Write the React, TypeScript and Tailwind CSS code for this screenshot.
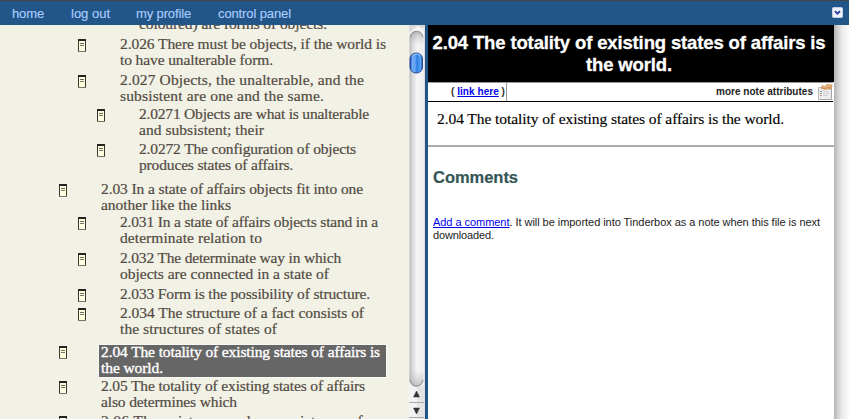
import { useLayoutEffect, useRef, useState } from "react";
import type { ReactNode } from "react";

/** One line of text, letter-spaced so that it spans `width` pixels. */
function Line({ width, className = "", children }: { width: number; className?: string; children: ReactNode }) {
  const ref = useRef<HTMLSpanElement>(null);
  const [spacing, setSpacing] = useState(0);
  useLayoutEffect(() => {
    const el = ref.current;
    if (!el) return;
    const natural = el.getBoundingClientRect().width;
    const count = (el.textContent ?? "").length;
    if (count > 1) setSpacing((width - natural) / count);
  }, [width]);
  return (
    <span className={`block w-max whitespace-pre ${className}`} ref={ref} style={{ letterSpacing: `${spacing}px` }}>
      {children}
    </span>
  );
}

type Note = { level: 1 | 2 | 3; height: string; lines: [string, number][]; selected?: boolean };

const notes: Note[] = [
  { level: 2, height: "h-9", lines: [["2.026 There must be objects, if the world is", 266], ["to have unalterable form.", 153]] },
  { level: 2, height: "h-[34px]", lines: [["2.027 Objects, the unalterable, and the", 244], ["subsistent are one and the same.", 204]] },
  { level: 3, height: "h-[35px]", lines: [["2.0271 Objects are what is unalterable", 230], ["and subsistent; their", 125]] },
  { level: 3, height: "h-10", lines: [["2.0272 The configuration of objects", 217], ["produces states of affairs.", 154]] },
  { level: 1, height: "h-[33px]", lines: [["2.03 In a state of affairs objects fit into one", 262], ["another like the links", 130]] },
  { level: 2, height: "h-9", lines: [["2.031 In a state of affairs objects stand in a", 258], ["determinate relation to", 142]] },
  { level: 2, height: "h-9", lines: [["2.032 The determinate way in which", 221], ["objects are connected in a state of", 209]] },
  { level: 2, height: "h-[19px]", lines: [["2.033 Form is the possibility of structure.", 250]] },
  { level: 2, height: "h-[38px]", lines: [["2.034 The structure of a fact consists of", 244], ["the structures of states of", 157]] },
  { level: 1, height: "h-[35px]", selected: true, lines: [["2.04 The totality of existing states of affairs is", 279], ["the world.", 62]] },
  { level: 1, height: "h-[35px]", lines: [["2.05 The totality of existing states of affairs", 264], ["also determines which", 136]] },
  { level: 1, height: "h-[35px]", lines: [["2.06 The existence and non-existence of", 262]] },
];

const indent = { 1: "pl-[59px]", 2: "pl-[78px]", 3: "pl-[97px]" };

function NoteIcon() {
  return (
    <svg className="mt-[3px] block shrink-0" width="8" height="13" viewBox="0 0 8 13" shapeRendering="crispEdges">
      <rect width="8" height="13" fill="#39372f" />
      <rect x="1" y="2" width="6" height="10" fill="#ffffdf" />
      <rect width="8" height="2" fill="#25231f" />
      <rect y="12" width="8" height="1" fill="#77756b" />
      <rect x="2" y="4" width="4" height="1" fill="#69675c" />
      <rect x="2" y="6" width="4" height="1" fill="#77756a" />
    </svg>
  );
}

function Outline() {
  return (
    <div className="h-full w-[409px] overflow-hidden bg-[#f1f1e5] font-['Liberation_Serif',serif] text-[15.5px] leading-4 text-[#514a42] [-webkit-text-stroke:0.2px]">
      <div className="-mt-[9px] h-5 pl-[139px]">
        <Line width={188}>coloured) are forms of objects.</Line>
      </div>
      {notes.map((note) => (
        <div key={note.lines[0][0]} className={`flex ${note.height} ${indent[note.level]}`}>
          <NoteIcon />
          {note.selected ? (
            <div className="ml-[31px] mt-px flex h-[34px] w-[289px] flex-col border border-dotted border-white bg-[#666] bg-clip-padding pl-[2px] text-white [-webkit-text-stroke:0.35px]">
              {note.lines.map(([text, width]) => <Line key={text} width={width} className="-mt-px mb-px">{text}</Line>)}
            </div>
          ) : (
            <div className="ml-[34px]">
              {note.lines.map(([text, width]) => <Line key={text} width={width}>{text}</Line>)}
            </div>
          )}
        </div>
      ))}
    </div>
  );
}

function Scrollbar() {
  return (
    <svg className="block h-[394px] w-[16px] shrink-0" viewBox="0 0 16 394">
      <defs>
        <linearGradient id="track">
          <stop offset="0" stopColor="#b9b9b9" />
          <stop offset=".2" stopColor="#d9d9d9" />
          <stop offset=".55" stopColor="#f6f6f6" />
          <stop offset="1" stopColor="#ececec" />
        </linearGradient>
        <linearGradient id="thumb">
          <stop offset="0" stopColor="#1643b5" />
          <stop offset=".2" stopColor="#73adf5" />
          <stop offset=".45" stopColor="#5b9df2" />
          <stop offset=".55" stopColor="#2f7ce4" />
          <stop offset=".85" stopColor="#58a5f4" />
          <stop offset="1" stopColor="#24489b" />
        </linearGradient>
        <linearGradient id="capTop" x2="0" y2="1">
          <stop offset="0" stopColor="#777" stopOpacity=".5" />
          <stop offset="1" stopColor="#aaa" stopOpacity="0" />
        </linearGradient>
        <linearGradient id="capBottom" x2="0" y2="1">
          <stop offset="0" stopColor="#aaa" stopOpacity="0" />
          <stop offset="1" stopColor="#888" stopOpacity=".5" />
        </linearGradient>
      </defs>
      <rect width="16" height="394" fill="#f3f3f3" />
      <path d="M0 0H16V4L8 1L0 8Z" fill="#dadada" />
      <rect x=".5" y="6" width="14" height="356" rx="7" fill="url(#track)" />
      <path d="M.5 20V14a7 8 0 0 1 14 0v6Z" fill="url(#capTop)" />
      <path d="M.5 345v9a7 8 0 0 0 14 0v-9Z" fill="url(#capBottom)" />
      <path d="M1 12C2 4.500 13 4.500 14 12M1 355C2 363 13 363 14 355" fill="none" stroke="#909090" />
      <rect x="1" y="28" width="12.500" height="20" rx="6" fill="url(#thumb)" stroke="#254894" />
      <path d="M4 30.500C6 28.500 9 28.500 11 30.500" fill="none" stroke="#b8d4fa" />
      <path d="M8 394V362L16 360V394Z" fill="#e4e4e4" />
      <path d="M0 377.500H16M0 392.500H16" stroke="#aaa" />
      <path d="M7.500 366L10.500 372H4.500ZM7.500 389L10.500 383H4.500Z" fill="#333" stroke="#333" strokeWidth=".5" />
      <path d="M15.500 0V394" stroke="#dedede" />
    </svg>
  );
}

function AttributesIcon() {
  return (
    <svg className="ml-[5px] block" width="15" height="16" viewBox="0 0 15 16">
      <path d="M.5 3.500H13.500V15.500H.5Z" fill="#ededed" stroke="#b9b9b9" />
      <path d="M1 15.500H13.500V4" fill="none" stroke="#a5a5a5" />
      <path d="M2 7.500H4" stroke="#779bd1" />
      <path d="M2 9.500H4" stroke="#7fbd7e" />
      <path d="M2 11.500H4" stroke="#d88d8d" />
      <path d="M5 7.500H11M5 9.500H11M5 11.500H10" stroke="#d2d2d2" />
      <path d="M4 1L7 2L9 0L14 .5L14.500 3L12 6L10 5L7 6L5 5L3 5Z" fill="#d69d65" />
      <path d="M5 3L8 3L10 1.500L13 2" fill="none" stroke="#efc18d" />
    </svg>
  );
}

export default function App() {
  return (
    <div className="h-[419px] w-[849px] overflow-hidden bg-white font-['Liberation_Sans',Arial,sans-serif]">
      <header className="flex h-[25px] items-center border-t border-[#464646] bg-[#225588] text-[13px] leading-4 text-[#a9ccff] [-webkit-text-stroke:0.15px]">
        <nav className="flex pl-3 pt-[2px]">
          <a className="w-[59px]"><Line width={32}>home</Line></a>
          <a className="w-[65px]"><Line width={39}>log out</Line></a>
          <a className="w-[82px]"><Line width={55}>my profile</Line></a>
          <a><Line width={73}>control panel</Line></a>
        </nav>
        <svg className="mb-px ml-auto mr-[6px]" width="11" height="11" viewBox="0 0 11 11">
          <rect x=".5" y=".5" width="10" height="10" rx="1" fill="#eef0fb" stroke="#c7cfeb" />
          <path d="M3 4.200L5.500 6.700L8 4.200" fill="none" stroke="#2538a6" strokeWidth="1.800" />
        </svg>
      </header>
      <div className="flex h-[394px]">
        <Outline />
        <Scrollbar />
        <div className="w-[3px] bg-[#225588]" />
        <main className="w-[406px] text-black">
          <h1 className="flex h-[57px] flex-col items-center bg-black pr-1 pt-[7px] text-[18.5px] font-bold leading-[22px] text-white [-webkit-text-stroke:0.3px]">
            <Line width={393}>2.04 The totality of existing states of affairs is</Line>
            <Line width={86}>the world.</Line>
          </h1>
          <div className="mr-px flex h-5 border-b border-t border-b-black border-t-[#999] text-[10px] font-bold leading-[18px]">
            <div className="w-[79px] border-r border-[#999] pl-[23px] text-[#333]">
              <Line width={54}>( <a className="text-[#0000ee] underline">link here</a> )</Line>
            </div>
            <div className="ml-auto flex pt-px text-[#222]">
              <Line width={97} className="leading-4">more note attributes</Line>
              <AttributesIcon />
            </div>
          </div>
          <div className="h-[45px] border-b-2 border-[#aaa] pl-[9px] pt-[9px] font-['Liberation_Serif',serif] text-[15.5px] leading-4 [-webkit-text-stroke:0.15px]">
            <Line width={347}>2.04 The totality of existing states of affairs is the world.</Line>
          </div>
          <h2 className="ml-[5px] mt-5 text-[16.5px] font-bold leading-5 text-[#335555] [-webkit-text-stroke:0.2px]"><Line width={85}>Comments</Line></h2>
          <div className="ml-[5px] mt-[29px] text-[11px] leading-[13px] text-[#222]">
            <Line width={387}><a className="text-[#0000ee] underline">Add a comment</a>. It will be imported into Tinderbox as a note when this file is next</Line>
            <Line width={61}>downloaded.</Line>
          </div>
        </main>
        <div className="w-[15px] bg-linear-to-r from-[#b5b5b5] via-[#e9e9e9] to-[#fcfcfc]" />
      </div>
    </div>
  );
}
